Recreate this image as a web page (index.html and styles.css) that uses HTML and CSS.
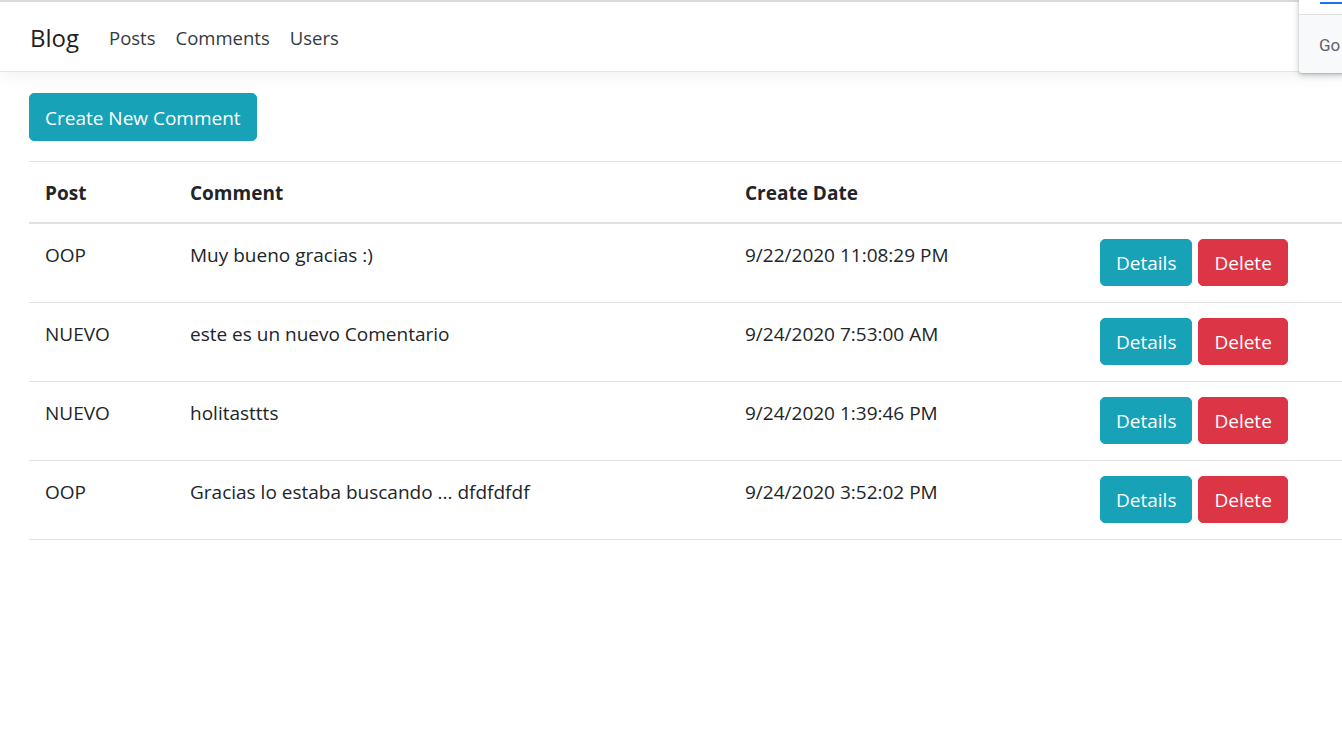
FILE: index.html
```html
<!DOCTYPE html>
<html lang="en">
<head>
<meta charset="utf-8">
<title>Comments - Blog</title>
<link rel="stylesheet" href="styles.css">
</head>
<body>
<div class="topline"></div>
<header class="navbar">
  <a class="brand" href="#">Blog</a>
  <nav class="nav">
    <a class="nav-link" href="#">Posts</a>
    <a class="nav-link" href="#">Comments</a>
    <a class="nav-link" href="#">Users</a>
  </nav>
</header>
<main class="main">
  <p class="actions-top"><a class="btn btn-info" href="#">Create New Comment</a></p>
  <table class="table">
    <thead>
      <tr>
        <th class="col-post">Post</th>
        <th class="col-comment">Comment</th>
        <th class="col-date">Create Date</th>
        <th class="col-actions"></th>
      </tr>
    </thead>
    <tbody>
      <tr>
        <td>OOP</td>
        <td>Muy bueno gracias :)</td>
        <td>9/22/2020 11:08:29 PM</td>
        <td class="cell-actions"><a class="btn btn-info" href="#">Details</a><a class="btn btn-danger" href="#">Delete</a></td>
      </tr>
      <tr>
        <td>NUEVO</td>
        <td>este es un nuevo Comentario</td>
        <td>9/24/2020 7:53:00 AM</td>
        <td class="cell-actions"><a class="btn btn-info" href="#">Details</a><a class="btn btn-danger" href="#">Delete</a></td>
      </tr>
      <tr>
        <td>NUEVO</td>
        <td>holitasttts</td>
        <td>9/24/2020 1:39:46 PM</td>
        <td class="cell-actions"><a class="btn btn-info" href="#">Details</a><a class="btn btn-danger" href="#">Delete</a></td>
      </tr>
      <tr>
        <td>OOP</td>
        <td>Gracias lo estaba buscando ... dfdfdfdf</td>
        <td>9/24/2020 3:52:02 PM</td>
        <td class="cell-actions"><a class="btn btn-info" href="#">Details</a><a class="btn btn-danger" href="#">Delete</a></td>
      </tr>
    </tbody>
  </table>
</main>
<div class="translate-popup">
  <div class="popup-head"><span class="popup-tab"></span></div>
  <div class="popup-body">Go</div>
</div>
</body>
</html>
```
FILE: styles.css
```css
html, body {
  margin: 0;
  padding: 0;
  background: #fff;
  overflow: hidden;
}
body {
  font-family: "Open Sans", "Noto Sans", sans-serif;
  font-size: 19px;
  line-height: 30px;
  color: #212529;
}
a { text-decoration: none; }

.topline {
  height: 2px;
  background: #dadce0;
}

.navbar {
  display: flex;
  align-items: center;
  height: 70px;
  box-sizing: border-box;
  padding: 2px 30px 0;
  border-bottom: 1px solid #e5e5e5;
  box-shadow: 0 5px 15px rgba(0, 0, 0, 0.05);
  background: #fff;
}
.brand {
  font-size: 24px;
  color: rgba(0, 0, 0, 0.9);
  margin-right: 20px;
  line-height: 34px;
}
.nav {
  display: flex;
}
.nav-link {
  color: #343a40;
  font-size: 18.5px;
  padding: 0 10px;
  line-height: 30px;
}

.main {
  padding: 21px 0 0 29px;
}
.actions-top {
  margin: 0 0 20px 0;
}

.btn {
  display: inline-block;
  color: #fff;
  border: 1px solid transparent;
  border-radius: 5px;
  padding: 8px 15px 7px;
  line-height: 30px;
  vertical-align: top;
}
.actions-top .btn {
  padding: 9px 15px 7px;
}
.btn-info {
  background: #17a2b8;
  border-color: #17a2b8;
}
.btn-danger {
  background: #dc3545;
  border-color: #dc3545;
}
.cell-actions .btn + .btn {
  margin-left: 6px;
}

.table {
  width: calc(100% + 200px);
  border-collapse: collapse;
  table-layout: fixed;
}
.table th, .table td {
  text-align: left;
  vertical-align: top;
  padding: 15px 16px 16px;
  line-height: 32px;
  border-top: 1px solid #dee2e6;
}
.table th {
  font-weight: 700;
  padding-top: 16px;
  padding-bottom: 14px;
  line-height: 30px;
  border-bottom: 2px solid #dee2e6;
}
.col-post { width: 113px; }
.col-comment { width: 523px; }
.col-date { width: 323px; }
.table tbody tr:last-child td {
  border-bottom: 1px solid #dee2e6;
}

.translate-popup {
  position: absolute;
  top: -2px;
  left: 1299px;
  width: 80px;
  height: 75px;
  background: #f8f9fa;
  border-radius: 0 0 0 3px;
  box-shadow: 0 2px 6px rgba(60, 64, 67, 0.3), 0 1px 2px rgba(60, 64, 67, 0.2);
  overflow: hidden;
  font-family: Roboto, "Liberation Sans", sans-serif;
}
.popup-head {
  height: 16px;
  background: #fff;
  border-bottom: 1px solid #e0e0e0;
  position: relative;
}
.popup-tab {
  position: absolute;
  left: 21px;
  top: 4px;
  width: 60px;
  height: 2px;
  background: #1a73e8;
}
.popup-body {
  padding: 20px 0 0 20px;
  font-size: 17px;
  line-height: 20px;
  color: #5f6368;
}
```
